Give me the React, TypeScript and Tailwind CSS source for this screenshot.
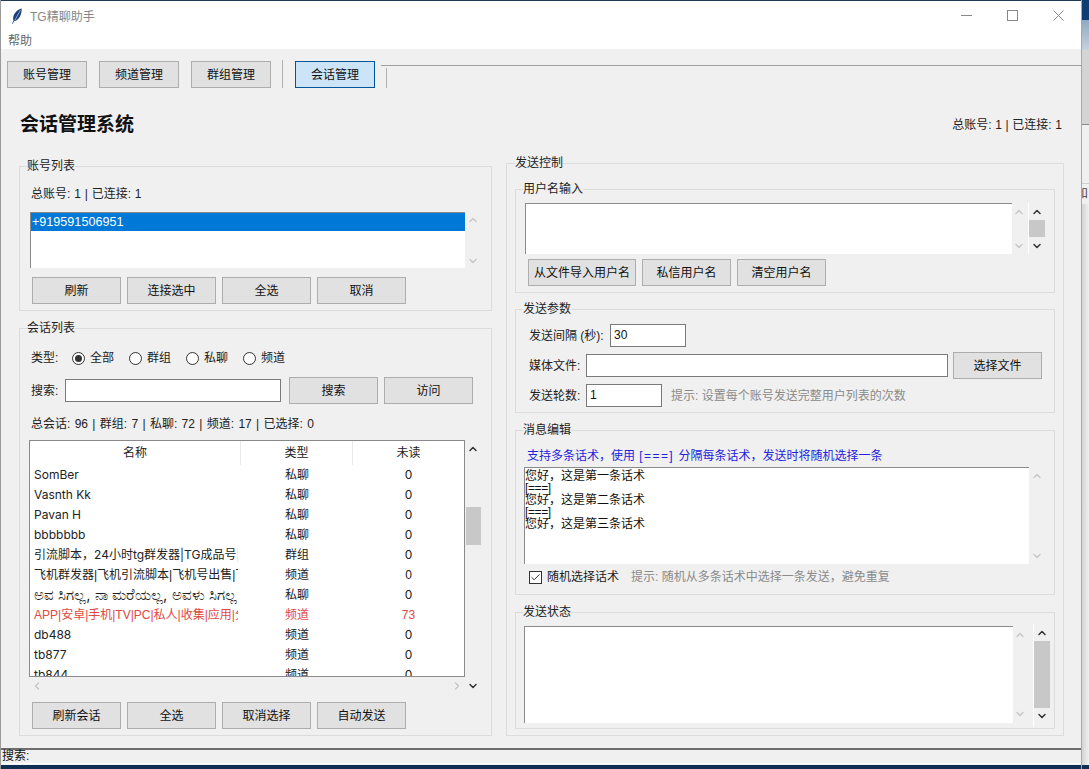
import React from "react";
import { ChevronUp, ChevronDown, ChevronLeft, ChevronRight, Check } from "lucide-react";

const FONT = { fontFamily: '"Liberation Sans","Noto Sans CJK SC",sans-serif' };
const TABLE_FONT = { fontFamily: 'Inter,"Noto Sans CJK SC",sans-serif' };

function Btn({ w = "w-[89px]", children, active }: { w?: string; children: React.ReactNode; active?: boolean }) {
  return (
    <div
      className={`${w} h-[27px] shrink-0 flex items-center justify-center border text-xs text-[#111] ${
        active ? "bg-[#cce4f7] border-[#005499]" : "bg-[#e1e1e1] border-[#adadad]"
      }`}
    >
      {children}
    </div>
  );
}

function Group({ title, className, children }: { title: string; className: string; children: React.ReactNode }) {
  return (
    <div className={`border border-[#dcdcdc] ${className}`}>
      <div className="-mt-[9px] ml-[7px] w-fit h-4 leading-4 bg-[#f0f0f0] text-xs text-[#222]">{title}</div>
      {children}
    </div>
  );
}

function Field({ w, h = "h-[23px]", text }: { w: string; h?: string; text?: string }) {
  return (
    <div className={`${w} ${h} shrink-0 bg-white border border-[#7a7a7a] pl-[3px] text-xs leading-[21px] text-[#111]`}>{text}</div>
  );
}

function Arrow({ up, dark }: { up?: boolean; dark?: boolean }) {
  const cls = dark ? "text-[#333]" : "text-[#c4c4c4]";
  return up ? (
    <ChevronUp size={12} strokeWidth={dark ? 3 : 2.5} className={cls} />
  ) : (
    <ChevronDown size={12} strokeWidth={dark ? 3 : 2.5} className={cls} />
  );
}

function FadedBar({ w, h, pad }: { w: string; h: string; pad: string }) {
  return (
    <div className={`${w} ${h} ${pad} shrink-0 flex flex-col items-center justify-between`}>
      <Arrow up />
      <Arrow />
    </div>
  );
}

function DarkBar({ h, thumb, pad, gap }: { h: string; thumb: string; pad: string; gap: string }) {
  return (
    <div className={`w-[17px] ${h} ${pad} shrink-0 border-l border-white flex flex-col items-center`}>
      <Arrow up dark />
      <div className={`w-4 ${thumb} ${gap} bg-[#c8c8c8]`} />
      <div className="flex-1" />
      <Arrow dark />
    </div>
  );
}

function Radio({ label, on }: { label: string; on?: boolean }) {
  return (
    <div className="flex items-center gap-[5px]">
      <span className="w-[13px] h-[13px] rounded-full bg-white border border-[#333] flex items-center justify-center">
        {on && <span className="w-[7px] h-[7px] rounded-full bg-[#333]" />}
      </span>
      <span className="text-xs text-[#222]">{label}</span>
    </div>
  );
}

type Row = { name: string; type: string; unread: string; red?: boolean; big?: boolean; narrow?: boolean };

const rows: Row[] = [
  { name: "SomBer", type: "私聊", unread: "0" },
  { name: "Vasnth Kk", type: "私聊", unread: "0" },
  { name: "Pavan H", type: "私聊", unread: "0" },
  { name: "bbbbbbb", type: "私聊", unread: "0" },
  { name: "引流脚本，24小时tg群发器|TG成品号|TG", type: "群组", unread: "0" },
  { name: "飞机群发器|飞机引流脚本|飞机号出售|飞机", type: "频道", unread: "0", narrow: true },
  { name: "ಅವ ಸಿಗಲ್ಲ, ನಾ ಮರೆಯಲ್ಲ, ಅವಳು ಸಿಗಲ್ಲ", type: "私聊", unread: "0", big: true },
  { name: "APP|安卓|手机|TV|PC|私人|收集|应用|分享", type: "频道", unread: "73", red: true, narrow: true },
  { name: "db488", type: "频道", unread: "0" },
  { name: "tb877", type: "频道", unread: "0" },
  { name: "tb844", type: "频道", unread: "0" },
];

export default function App() {
  return (
    <div style={FONT} className="w-[1089px] h-[769px] overflow-hidden flex bg-[#0f2e52]">
      {/* left edge of the screen */}
      <div className="w-px h-full shrink-0 bg-[#9a9a9a]" />

      {/* window */}
      <div className="w-[1080px] h-full shrink-0 flex flex-col">
        <div className="h-px bg-[#1e3a56]" />
        <div className="h-[31px] pb-[2px] bg-white flex items-center pl-[10px]">
          <svg width="12" height="16" viewBox="0 0 12 16" className="shrink-0">
            <path d="M10.5 .5C6.5 1.5 3 5 2.2 9.5 2 11 2.2 12 2.6 12.6L1 15.5l.7.3 1.5-2.7C6 12.800 8.600 10 9.800 6.500 10.500 4.500 10.900 2.200 10.500 .5Z" fill="#1d3f77" />
            <path d="M9.500 2 4 12" stroke="#9fc0e8" strokeWidth=".8" fill="none" />
          </svg>
          <span className="ml-[7px] mt-[2px] text-xs text-[#888]">TG精聊助手</span>
          <div className="flex-1" />
          <svg width="11" height="11" viewBox="0 0 11 11" className="mr-[35px]">
            <path d="M0 5.500h11" stroke="#888" fill="none" />
          </svg>
          <svg width="11" height="11" viewBox="0 0 11 11" className="mr-[35px]">
            <rect x=".5" y=".5" width="10" height="10" stroke="#888" fill="none" />
          </svg>
          <svg width="11" height="11" viewBox="0 0 11 11" className="mr-[17px]">
            <path d="M.5 .5l10 10M10.500 .5l-10 10" stroke="#888" fill="none" />
          </svg>
        </div>
        <div className="h-[17px] bg-white pl-[7px] text-xs leading-[19px] text-[#666] overflow-hidden">帮助</div>

        <div className="flex-1 min-h-0 bg-[#f0f0f0] flex flex-col">
          {/* toolbar */}
          <div className="h-[39px] pt-3 pl-[6px] flex items-start shrink-0">
            <Btn w="w-[80px]">账号管理</Btn>
            <div className="ml-3"><Btn w="w-[80px]">频道管理</Btn></div>
            <div className="ml-3"><Btn w="w-[80px]">群组管理</Btn></div>
            <div className="ml-[11px] w-px h-[28px] -mt-px bg-[#b0b0b0]" />
            <div className="ml-3"><Btn w="w-[80px]" active>会话管理</Btn></div>
            <div className="ml-[6px] flex-1 mt-1 h-[23px] border-t border-[#a0a0a0]">
              <div className="ml-[5px] mt-[2px] w-px h-[20px] bg-[#b0b0b0]" />
            </div>
          </div>

          {/* heading */}
          <div className="h-[75px] shrink-0 pt-[25px] pl-[19px] pr-[19px]">
            <div className="h-6 flex items-center justify-between">
              <span className="text-[19px] font-bold text-[#111]">会话管理系统</span>
              <span className="text-xs text-[#222] [word-spacing:0.3px]">总账号: 1 | 已连接: 1</span>
            </div>
          </div>

          {/* columns */}
          <div className="h-[573px] shrink-0 flex pl-[18px]">
            <div className="w-[473px] shrink-0 pt-[3px]">
              <Group title="账号列表" className="h-[145px]">
                <div className="mt-3 ml-[11px] h-4 leading-4 text-xs text-[#222] [word-spacing:0.5px]">总账号: 1 | 已连接: 1</div>
                <div className="mt-[10px] ml-[10px] flex">
                  <div className="w-[435px] h-[56px] bg-white border-t border-l border-[#8a8a8a]">
                    <div className="h-[18px] bg-[#0078d7] text-white text-[12.6px] leading-[18px] pl-px">+919591506951</div>
                  </div>
                  <FadedBar w="w-4" h="h-[56px]" pad="pt-[2px] pb-px" />
                </div>
                <div className="mt-[9px] ml-3 flex gap-[6px]">
                  <Btn>刷新</Btn>
                  <Btn>连接选中</Btn>
                  <Btn>全选</Btn>
                  <Btn>取消</Btn>
                </div>
              </Group>

              <Group title="会话列表" className="mt-[17px] h-[408px]">
                <div className="mt-[14px] ml-[11px] h-4 flex items-center">
                  <span className="w-[41px] text-xs text-[#222]">类型:</span>
                  <div className="flex gap-[15px]">
                    <Radio label="全部" on />
                    <Radio label="群组" />
                    <Radio label="私聊" />
                    <Radio label="频道" />
                  </div>
                </div>
                <div className="mt-[11px] ml-[11px] h-[27px] flex items-center">
                  <span className="w-[34px] text-xs text-[#222]">搜索:</span>
                  <Field w="w-[216px]" />
                  <div className="ml-2 flex gap-[6px]">
                    <Btn>搜索</Btn>
                    <Btn>访问</Btn>
                  </div>
                </div>
                <div className="mt-3 ml-[11px] h-4 leading-4 text-xs text-[#222] [word-spacing:1px]">
                  总会话: 96 | 群组: 7 | 私聊: 72 | 频道: 17 | 已选择: 0
                </div>
                <div className="mt-2 ml-[9px] flex">
                  <div className="w-[436px]">
                    <div className="h-[237px] bg-white border border-[#8a8a8a] overflow-hidden">
                      <div className="h-6 grid grid-cols-[211px_112px_111px] text-xs text-[#222]">
                        <div className="border-r border-[#e8e8e8] flex items-center justify-center">名称</div>
                        <div className="border-r border-[#e8e8e8] flex items-center justify-center">类型</div>
                        <div className="flex items-center justify-center">未读</div>
                      </div>
                      {rows.map((r) => (
                        <div
                          key={r.name}
                          style={r.narrow ? FONT : TABLE_FONT}
                          className={`h-5 grid grid-cols-[211px_112px_111px] items-center text-xs leading-5 ${
                            r.red ? "text-[#e0493f]" : "text-[#222]"
                          }`}
                        >
                          <div className={`pl-1 mr-[3px] overflow-hidden whitespace-nowrap ${r.big ? "text-[15px]" : ""}`}>{r.name}</div>
                          <div className="text-center">{r.type}</div>
                          <div className="text-center">{r.unread}</div>
                        </div>
                      ))}
                    </div>
                    <div className="h-[17px] pl-[2px] pr-[2px] flex items-center justify-between">
                      <ChevronLeft size={12} strokeWidth={2.5} className="text-[#c4c4c4]" />
                      <ChevronRight size={12} strokeWidth={2.5} className="text-[#c4c4c4]" />
                    </div>
                  </div>
                  <div className="w-4 h-[254px] pt-[3px] pb-[2px] flex flex-col items-center">
                    <Arrow up dark />
                    <div className="mt-[52px] w-[15px] h-[38px] bg-[#c8c8c8]" />
                    <div className="flex-1" />
                    <Arrow dark />
                  </div>
                </div>
                <div className="mt-2 ml-3 flex gap-[6px]">
                  <Btn>刷新会话</Btn>
                  <Btn>全选</Btn>
                  <Btn>取消选择</Btn>
                  <Btn>自动发送</Btn>
                </div>
              </Group>
            </div>

            <div className="w-[558px] ml-[14px] shrink-0 border border-[#dcdcdc] h-[573px] pl-2">
              <div className="-mt-[9px] w-fit h-4 leading-4 bg-[#f0f0f0] text-xs text-[#222]">发送控制</div>

              <Group title="用户名输入" className="mt-[18px] w-[540px] h-[104px]">
                <div className="mt-[6px] ml-[9px] flex">
                  <div className="w-[487px] h-[51px] bg-white border-t border-l border-[#8a8a8a]" />
                  <FadedBar w="w-[14px]" h="h-[51px]" pad="pt-[3px] pb-[2px]" />
                  <div className="w-[2px]" />
                  <DarkBar h="h-[51px]" pad="pt-[3px] pb-[2px]" gap="mt-[2px]" thumb="h-[17px]" />
                </div>
                <div className="mt-[5px] ml-3 flex gap-[6px]">
                  <Btn w="w-[108px]">从文件导入用户名</Btn>
                  <Btn>私信用户名</Btn>
                  <Btn>清空用户名</Btn>
                </div>
              </Group>

              <Group title="发送参数" className="mt-4 w-[540px] h-[104px]">
                <div className="mt-[7px] ml-[13px] h-[23px] flex items-center text-xs text-[#222]">
                  <span className="w-[81px] shrink-0">发送间隔 (秒):</span>
                  <Field w="w-[76px]" text="30" />
                </div>
                <div className="mt-[5px] ml-[13px] h-[27px] flex items-center text-xs text-[#222]">
                  <span className="w-[57px] shrink-0">媒体文件:</span>
                  <Field w="w-[362px]" />
                  <div className="ml-[5px]"><Btn>选择文件</Btn></div>
                </div>
                <div className="mt-[5px] ml-[13px] h-[23px] flex items-center text-xs text-[#222]">
                  <span className="w-[57px] shrink-0">发送轮数:</span>
                  <Field w="w-[76px]" text="1" />
                  <span className="ml-[9px] text-[#8a8a8a]">提示: 设置每个账号发送完整用户列表的次数</span>
                </div>
              </Group>

              <Group title="消息编辑" className="mt-[17px] w-[540px] h-[165px]">
                <div className="mt-[10px] ml-[11px] h-4 leading-4 text-xs text-[#2222dd] [word-spacing:1px]">
                  支持多条话术，使用 <span className="tracking-[1.4px]">[===]</span> 分隔每条话术，发送时将随机选择一条
                </div>
                <div className="mt-[3px] ml-2 flex">
                  <div className="w-[505px] h-[97px] bg-white border-t border-l border-[#8a8a8a] pt-[2px] text-xs leading-3 text-[#111]">
                    <div>您好，这是第一条话术</div>
                    <div className="tracking-[-0.4px]">[===]</div>
                    <div>您好，这是第二条话术</div>
                    <div className="tracking-[-0.4px]">[===]</div>
                    <div>您好，这是第三条话术</div>
                  </div>
                  <FadedBar w="w-4" h="h-[97px]" pad="pt-[3px] pb-[2px]" />
                </div>
                <div className="mt-[5px] ml-[13px] h-4 flex items-center text-xs">
                  <span className="w-[13px] h-[13px] bg-white border border-[#333] flex items-center justify-center">
                    <Check size={11} strokeWidth={2} className="text-[#222]" />
                  </span>
                  <span className="ml-[5px] text-[#222]">随机选择话术</span>
                  <span className="ml-3 text-[#8a8a8a]">提示: 随机从多条话术中选择一条发送，避免重复</span>
                </div>
              </Group>

              <Group title="发送状态" className="mt-[17px] w-[540px] h-[117px]">
                <div className="mt-1 ml-2 flex">
                  <div className="mt-[2px] w-[489px] h-[97px] bg-white border-t border-l border-[#8a8a8a]" />
                  <FadedBar w="w-[14px]" h="h-[101px]" pad="pt-[5px] pb-[5px]" />
                  <div className="w-[6px]" />
                  <DarkBar h="h-[103px]" pad="pt-[3px] pb-[5px]" gap="mt-[2px]" thumb="h-[67px]" />
                </div>
              </Group>
            </div>
          </div>

          {/* status bar */}
          <div className="mt-3 h-4 shrink-0 border-t-2 border-b border-t-[#6e6e6e] border-b-white pl-px text-xs leading-3 text-[#111]">
            搜索:
          </div>
        </div>
        <div className="h-1 shrink-0 bg-[#0f2e52]" />
      </div>

      {/* neighbouring desktop at the right edge */}
      <div className="flex-1 h-full flex flex-col border-l border-[#a8a8a8] text-xs">
        <div className="h-5 bg-[#0f3c72]" />
        <div className="h-[30px] bg-linear-to-b from-[#8fa9c2] to-[#c6d2dd]" />
        <div className="h-[75px] bg-[#d4d4d4] border-b border-[#8a8a8a]" />
        <div className="h-[59px] bg-[#f0f0f0] border-b border-[#cfcfcf]" />
        <div className="h-[20px] bg-[#f0f0f0] overflow-hidden whitespace-nowrap text-[#444] leading-5 -indent-[6px]">和</div>
        <div className="flex-1 bg-linear-to-r from-[#d4d4d4] to-[#f0f0f0]" />
        <div className="h-1 bg-[#0f2e52]" />
      </div>
    </div>
  );
}
